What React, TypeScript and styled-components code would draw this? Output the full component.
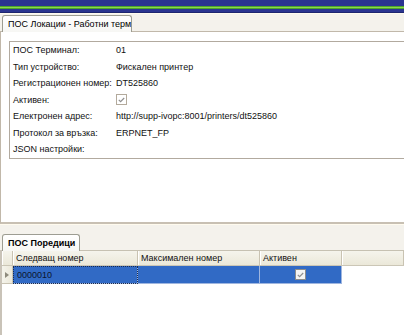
import styled, { createGlobalStyle } from "styled-components";

const GlobalStyle = createGlobalStyle`
  html, body {
    margin: 0;
    padding: 0;
    background: #ffffff;
  }
  body {
    font-family: "Liberation Sans", Arial, sans-serif;
    font-size: 9px;
    color: #000;
  }
`;

const fields = [
  { label: "ПОС Терминал:", value: "01" },
  { label: "Тип устройство:", value: "Фискален принтер" },
  { label: "Регистрационен номер:", value: "DT525860" },
  { label: "Активен:", value: "", check: true },
  { label: "Електронен адрес:", value: "http://supp-ivopc:8001/printers/dt525860" },
  { label: "Протокол за връзка:", value: "ERPNET_FP" },
  { label: "JSON настройки:", value: "" },
];

const columns = [
  { title: "Следващ номер", width: 125 },
  { title: "Максимален номер", width: 122 },
  { title: "Активен", width: 82 },
];

const CheckMark = () => (
  <svg width="7" height="6" viewBox="0 0 7 6">
    <path d="M0.8 2.8 L2.6 4.6 L6.2 1" fill="none" stroke="#8f8f8f" strokeWidth="1.2" />
  </svg>
);

export default function App() {
  return (
    <Window>
      <GlobalStyle />
      <TitleBand />

      <TopSection>
        <TabStrip $height={18}>
          <Tab $width={130}>ПОС Локации - Работни терм</Tab>
        </TabStrip>
        <TabPage>
          <FieldBox>
            {fields.map((f) => (
              <FieldRow key={f.label}>
                <Label>{f.label}</Label>
                {f.check ? (
                  <CheckBox>
                    <CheckMark />
                  </CheckBox>
                ) : (
                  <Value>{f.value}</Value>
                )}
              </FieldRow>
            ))}
          </FieldBox>
        </TabPage>
      </TopSection>

      <BottomSection>
        <TabStrip $height={26}>
          <Tab $width={78} $bold>
            ПОС Поредици
          </Tab>
        </TabStrip>
        <Grid>
          <HeaderRow>
            <HeaderCell $width={11} />
            {columns.map((c) => (
              <HeaderCell key={c.title} $width={c.width}>
                {c.title}
              </HeaderCell>
            ))}
            <HeaderCell $fill />
          </HeaderRow>
          <DataRow>
            <RowIndicator>
              <svg width="4" height="6" viewBox="0 0 4 6">
                <path d="M0 0 L4 3 L0 6 Z" fill="#8d8a7c" />
              </svg>
            </RowIndicator>
            <DataCell $width={125} $focus>
              0000010
            </DataCell>
            <DataCell $width={122} />
            <DataCell $width={82} $center>
              <CheckBox $grid>
                <CheckMark />
              </CheckBox>
            </DataCell>
          </DataRow>
          <GridBody />
        </Grid>
      </BottomSection>
    </Window>
  );
}

const Window = styled.div`
  width: 404px;
  height: 335px;
  overflow: hidden;
  display: flex;
  flex-direction: column;
  background: #ffffff;
`;

const TitleBand = styled.div`
  height: 13px;
  flex: none;
  background: linear-gradient(
    to bottom,
    #2b3590 0 6px,
    #4ea52c 6px 7px,
    #8ad84e 7px 8px,
    #4ea52c 8px 9px,
    #2b3590 9px 12px,
    #1e266f 12px 13px
  );
`;

const TopSection = styled.div`
  height: 211px;
  flex: none;
  display: flex;
  flex-direction: column;
`;

const TabStrip = styled.div<{ $height: number }>`
  height: ${(p) => p.$height}px;
  flex: none;
  display: flex;
  align-items: flex-end;
  padding-left: 2px;
  background: #f4f2ec;
  border-top: 1px solid #fffbee;
  box-sizing: border-box;
`;

const Tab = styled.div<{ $width: number; $bold?: boolean }>`
  width: ${(p) => p.$width}px;
  height: 17px;
  box-sizing: border-box;
  border: 1px solid #9d9d92;
  border-bottom: none;
  border-radius: 3px 3px 0 0;
  background: linear-gradient(to bottom, #ffffff, #f7f7f4);
  padding: 3px 0 0 5px;
  font-weight: ${(p) => (p.$bold ? 700 : 400)};
  white-space: nowrap;
  margin-bottom: -1px;
  position: relative;
  z-index: 1;
`;

const TabPage = styled.div`
  flex: 1;
  background: #ffffff;
  border-top: 1px solid #c1b8aa;
  border-left: 1px solid #c1b8aa;
  border-bottom: 2px solid #c8c0b3;
  padding: 9px 0 0 8px;
`;

const FieldBox = styled.div`
  height: 118px;
  box-sizing: border-box;
  border: 1px solid #b2aa9f;
  border-right: none;
  padding: 0 0 0 3px;
`;

const FieldRow = styled.div`
  height: 16.5px;
  display: grid;
  grid-template-columns: 103px 1fr;
  align-items: center;
`;

const Label = styled.span`
  white-space: nowrap;
  color: #111;
`;

const Value = styled.span`
  white-space: nowrap;
  color: #111;
`;

const CheckBox = styled.div<{ $grid?: boolean }>`
  width: 11px;
  height: 11px;
  box-sizing: border-box;
  border: 1px solid ${(p) => (p.$grid ? "#8c8c8c" : "#b3aa9c")};
  background: ${(p) => (p.$grid ? "#f4f4f4" : "#ffffff")};
  display: flex;
  align-items: center;
  justify-content: center;
`;

const BottomSection = styled.div`
  flex: 1;
  display: flex;
  flex-direction: column;
  background: #f4f2ec;
`;

const Grid = styled.div`
  flex: 1;
  display: flex;
  flex-direction: column;
  border-left: 2px solid #c9c3b8;
  background: #ffffff;
`;

const HeaderRow = styled.div`
  height: 16px;
  flex: none;
  display: flex;
  background: linear-gradient(to bottom, #f5f4ec, #ebe8d9);
  border-top: 1px solid #c6c1b2;
  border-bottom: 1px solid #cbc6b6;
  box-sizing: border-box;
`;

const HeaderCell = styled.div<{ $width?: number; $fill?: boolean }>`
  ${(p) => (p.$fill ? "flex: 1;" : `width: ${p.$width}px; flex: none;`)}
  box-sizing: border-box;
  border-right: 1px solid #c9c3b2;
  box-shadow: inset 1px 0 0 #ffffff;
  padding: 2px 0 0 3px;
  white-space: nowrap;
  overflow: hidden;
  color: #111;
`;

const DataRow = styled.div`
  height: 18px;
  flex: none;
  display: flex;
`;

const RowIndicator = styled.div`
  width: 11px;
  flex: none;
  box-sizing: border-box;
  background: linear-gradient(to right, #f5f4ec, #ebe8d9);
  border-right: 1px solid #c9c3b2;
  border-bottom: 1px solid #c9c3b2;
  display: flex;
  align-items: center;
  justify-content: center;
`;

const DataCell = styled.div<{ $width: number; $focus?: boolean; $center?: boolean }>`
  width: ${(p) => p.$width}px;
  flex: none;
  box-sizing: border-box;
  background: #316ac5;
  border-right: 1px solid #9fb6df;
  border-bottom: 1px solid #9fb6df;
  outline: ${(p) => (p.$focus ? "1px dotted #1a2b4f" : "none")};
  outline-offset: -1px;
  padding-left: ${(p) => (p.$center ? 0 : 4)}px;
  display: flex;
  align-items: center;
  justify-content: ${(p) => (p.$center ? "center" : "flex-start")};
  color: #0b1530;
  white-space: nowrap;
`;

const GridBody = styled.div`
  flex: 1;
  background: #ffffff;
`;
